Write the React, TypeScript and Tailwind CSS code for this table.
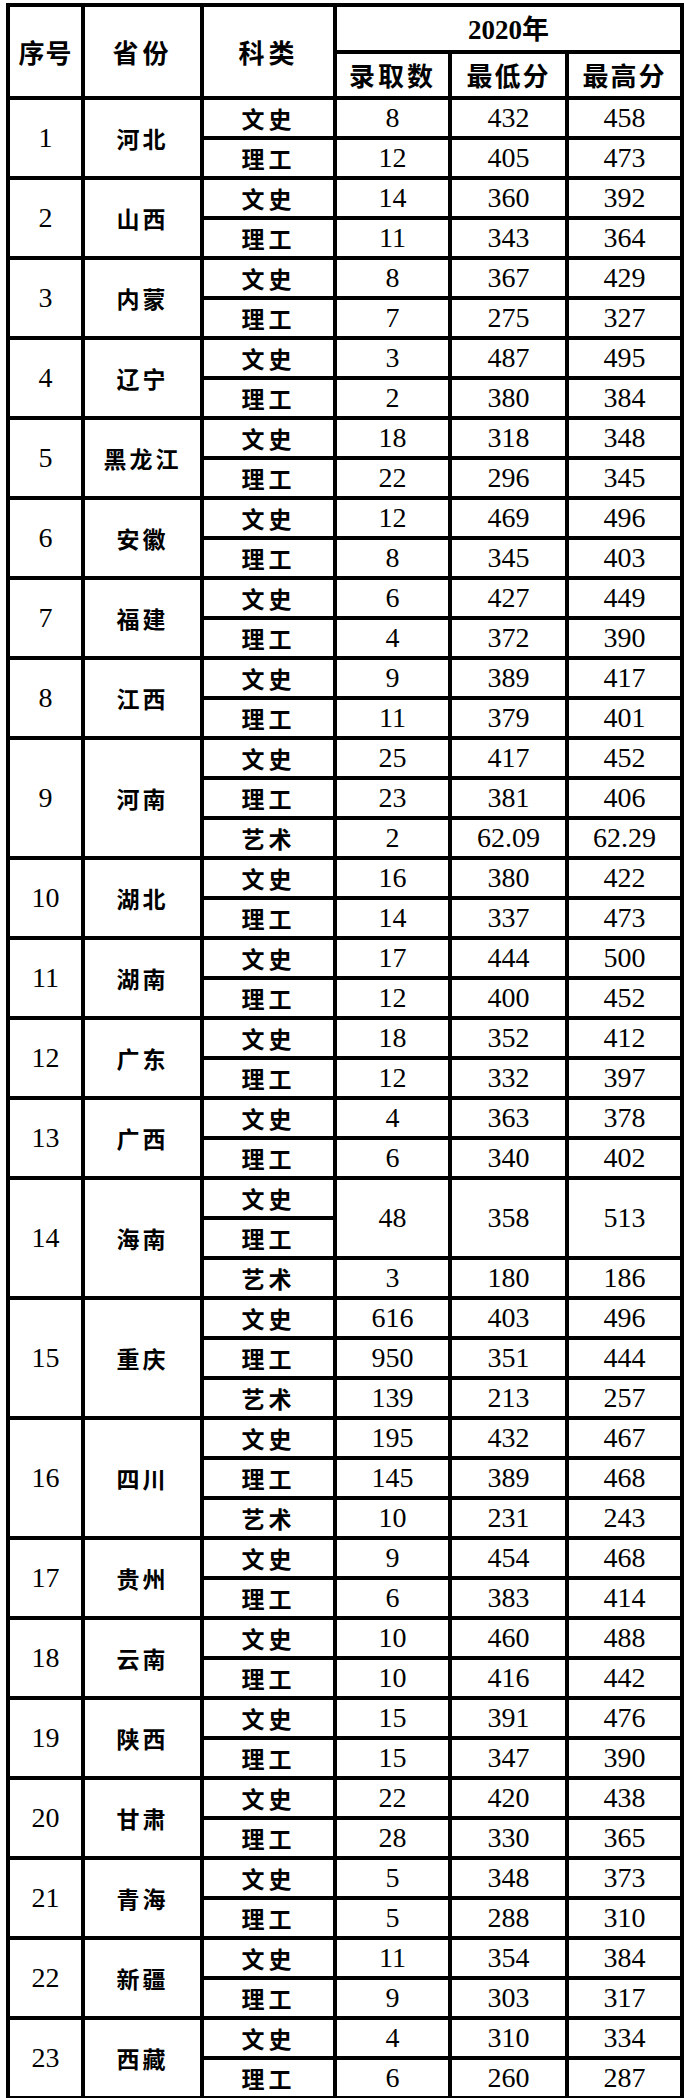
type Row = { k: string; v?: string[]; span?: number }
type Group = { no: number; prov: string; rows: Row[] }

const two = (a: string[], b: string[]): Row[] => [
  { k: '文史', v: a },
  { k: '理工', v: b },
]

const groups: Group[] = [
  { no: 1, prov: '河北', rows: two(['8', '432', '458'], ['12', '405', '473']) },
  { no: 2, prov: '山西', rows: two(['14', '360', '392'], ['11', '343', '364']) },
  { no: 3, prov: '内蒙', rows: two(['8', '367', '429'], ['7', '275', '327']) },
  { no: 4, prov: '辽宁', rows: two(['3', '487', '495'], ['2', '380', '384']) },
  { no: 5, prov: '黑龙江', rows: two(['18', '318', '348'], ['22', '296', '345']) },
  { no: 6, prov: '安徽', rows: two(['12', '469', '496'], ['8', '345', '403']) },
  { no: 7, prov: '福建', rows: two(['6', '427', '449'], ['4', '372', '390']) },
  { no: 8, prov: '江西', rows: two(['9', '389', '417'], ['11', '379', '401']) },
  {
    no: 9,
    prov: '河南',
    rows: [...two(['25', '417', '452'], ['23', '381', '406']), { k: '艺术', v: ['2', '62.09', '62.29'] }],
  },
  { no: 10, prov: '湖北', rows: two(['16', '380', '422'], ['14', '337', '473']) },
  { no: 11, prov: '湖南', rows: two(['17', '444', '500'], ['12', '400', '452']) },
  { no: 12, prov: '广东', rows: two(['18', '352', '412'], ['12', '332', '397']) },
  { no: 13, prov: '广西', rows: two(['4', '363', '378'], ['6', '340', '402']) },
  {
    no: 14,
    prov: '海南',
    rows: [
      { k: '文史', v: ['48', '358', '513'], span: 2 },
      { k: '理工' },
      { k: '艺术', v: ['3', '180', '186'] },
    ],
  },
  {
    no: 15,
    prov: '重庆',
    rows: [...two(['616', '403', '496'], ['950', '351', '444']), { k: '艺术', v: ['139', '213', '257'] }],
  },
  {
    no: 16,
    prov: '四川',
    rows: [...two(['195', '432', '467'], ['145', '389', '468']), { k: '艺术', v: ['10', '231', '243'] }],
  },
  { no: 17, prov: '贵州', rows: two(['9', '454', '468'], ['6', '383', '414']) },
  { no: 18, prov: '云南', rows: two(['10', '460', '488'], ['10', '416', '442']) },
  { no: 19, prov: '陕西', rows: two(['15', '391', '476'], ['15', '347', '390']) },
  { no: 20, prov: '甘肃', rows: two(['22', '420', '438'], ['28', '330', '365']) },
  { no: 21, prov: '青海', rows: two(['5', '348', '373'], ['5', '288', '310']) },
  { no: 22, prov: '新疆', rows: two(['11', '354', '384'], ['9', '303', '317']) },
  { no: 23, prov: '西藏', rows: two(['4', '310', '334'], ['6', '260', '287']) },
]

const cell = 'border-4 border-black text-center align-middle p-0 leading-none'
const num = "font-['Liberation_Serif','Times_New_Roman',serif] text-[28px] font-normal"
const cjk = "font-['Noto_Sans_CJK_SC',sans-serif] font-bold"

export default function App() {
  return (
    <div className="bg-white w-[684px] h-[2098px] pt-[3px] pl-[6px] text-black">
      <table className="border-collapse table-fixed w-[674px] border-4 border-black">
        <colgroup>
          <col className="w-[75px]" />
          <col className="w-[119px]" />
          <col className="w-[133px]" />
          <col className="w-[115px]" />
          <col className="w-[117px]" />
          <col className="w-[115px]" />
        </colgroup>
        <thead>
          <tr className="h-[47px]">
            <th rowSpan={2} className={`${cell} ${cjk} text-[26px] tracking-[1px]`}>序号</th>
            <th rowSpan={2} className={`${cell} ${cjk} text-[26px] tracking-[4px]`}>省份</th>
            <th rowSpan={2} className={`${cell} ${cjk} text-[26px] tracking-[4px]`}>科类</th>
            <th colSpan={3} className={`${cell} font-bold text-[27px]`}>
              <span className="font-['Liberation_Serif','Times_New_Roman',serif]">2020</span>
              <span className="font-['Noto_Sans_CJK_SC',sans-serif]">年</span>
            </th>
          </tr>
          <tr className="h-[46px]">
            <th className={`${cell} ${cjk} text-[26px] tracking-[3px]`}>录取数</th>
            <th className={`${cell} ${cjk} text-[26px] tracking-[2px]`}>最低分</th>
            <th className={`${cell} ${cjk} text-[26px] tracking-[2px]`}>最高分</th>
          </tr>
        </thead>
        <tbody>
          {groups.flatMap((g) =>
            g.rows.map((r, i) => (
              <tr key={`${g.no}-${i}`} className="h-[40px]">
                {i === 0 && (
                  <>
                    <td rowSpan={g.rows.length} className={`${cell} ${num}`}>
                      {g.no}
                    </td>
                    <td rowSpan={g.rows.length} className={`${cell} ${cjk} text-[23px] tracking-[3px]`}>
                      {g.prov}
                    </td>
                  </>
                )}
                <td className={`${cell} ${cjk} text-[23px] tracking-[4px]`}>{r.k}</td>
                {r.v?.map((x, j) => (
                  <td key={j} rowSpan={r.span ?? 1} className={`${cell} ${num}`}>
                    {x}
                  </td>
                ))}
              </tr>
            ))
          )}
        </tbody>
      </table>
    </div>
  )
}
